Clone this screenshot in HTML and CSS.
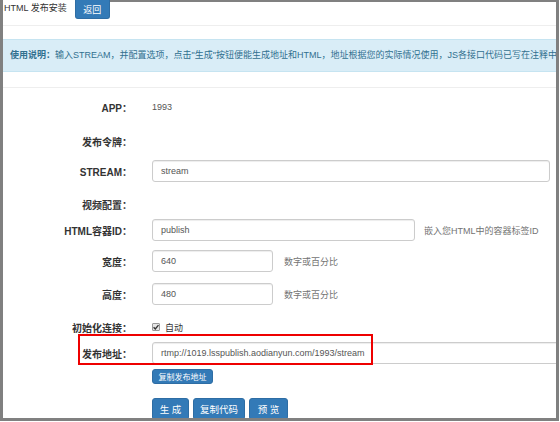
FILE: index.html
```html
<!DOCTYPE html>
<html lang="zh-CN">
<head>
<meta charset="utf-8">
<title>HTML 发布安装</title>
<link rel="stylesheet" href="styles.css">
</head>
<body>
<div class="frame">
  <div class="header">
    <span class="title">HTML 发布安装</span>
    <a class="btn btn-back">返回</a>
    <span class="topline"></span>
  </div>
  <div class="alert"><b>使用说明：</b>输入STREAM，并配置选项，点击"生成"按钮便能生成地址和HTML，地址根据您的实际情况使用，JS各接口代码已写在注释中</div>
  <div class="divider"></div>
  <div class="form">
    <div class="row">
      <span class="label">APP：</span>
      <span class="static">1993</span>
    </div>
    <div class="row g12">
      <span class="label">发布令牌：</span>
    </div>
    <div class="row g8">
      <span class="label">STREAM：</span>
      <span class="input w-full">stream</span>
    </div>
    <div class="row g11">
      <span class="label">视频配置：</span>
    </div>
    <div class="row g4">
      <span class="label">HTML容器ID：</span>
      <span class="input w-mid">publish</span>
      <span class="help help-wide">嵌入您HTML中的容器标签ID</span>
    </div>
    <div class="row g9">
      <span class="label">宽度：</span>
      <span class="input w-small">640</span>
      <span class="help">数字或百分比</span>
    </div>
    <div class="row g11">
      <span class="label">高度：</span>
      <span class="input w-small">480</span>
      <span class="help">数字或百分比</span>
    </div>
    <div class="row g11">
      <span class="label">初始化连接：</span>
      <span class="check">
        <span class="box"><svg viewBox="0 0 8 8" width="8" height="8"><path d="M1.6 4.2 L3.3 5.9 L6.5 2.1" fill="none" stroke="#333" stroke-width="1.4"/></svg></span>
        <span class="check-text">自动</span>
      </span>
    </div>
    <div class="row g4">
      <span class="label">发布地址：</span>
      <span class="input w-url">rtmp://1019.lsspublish.aodianyun.com/1993/stream</span>
    </div>
    <div class="row-btn g5">
      <a class="btn btn-xs">复制发布地址</a>
    </div>
    <div class="row-btn g14 actions">
      <a class="btn btn-main">生 成</a>
      <a class="btn btn-main">复制代码</a>
      <a class="btn btn-main">预 览</a>
    </div>
  </div>
  <div class="annot"></div>
</div>
</body>
</html>
```

FILE: styles.css
```css
html, body {
  margin: 0;
  padding: 0;
  background: #ffffff;
}
body {
  width: 560px;
  height: 422px;
  overflow: hidden;
  font-family: "Liberation Sans", "Noto Sans CJK SC", sans-serif;
  color: #333333;
}
.frame {
  position: relative;
  width: 559px;
  height: 421px;
  box-sizing: border-box;
  border-left: 3px solid #808080;
  border-right: 3px solid #808080;
  border-bottom: 3px solid #808080;
  overflow: hidden;
}
.header {
  display: flex;
  align-items: flex-start;
  height: 25px;
  border-bottom: 1px solid #eeeeee;
}
.title {
  font-size: 9px;
  line-height: 16px;
  padding-left: 1px;
  color: #333333;
}
.btn {
  display: inline-flex;
  align-items: center;
  justify-content: center;
  box-sizing: border-box;
  background: #337ab7;
  border: 1px solid #2e6da4;
  color: #ffffff;
  border-radius: 3px;
  white-space: nowrap;
}
.btn-back {
  margin-left: 8px;
  width: 35px;
  height: 19px;
  font-size: 9px;
  border-top: 0;
  border-radius: 0 0 3px 3px;
}
.topline {
  flex: 1;
  border-top: 2px solid #808080;
}
.alert {
  margin-top: 13px;
  height: 33px;
  box-sizing: border-box;
  background: #d9edf7;
  border-top: 1px solid #c6e4f1;
  border-bottom: 1px solid #c6e4f1;
  color: #31708f;
  font-size: 9px;
  line-height: 31px;
  padding-left: 7px;
  white-space: nowrap;
  overflow: hidden;
}
.divider {
  margin-top: 15px;
  border-top: 1px solid #eeeeee;
}
.form {
  display: flex;
  flex-direction: column;
  padding-top: 8px;
}
.row {
  display: flex;
  align-items: center;
  height: 22px;
}
.row-btn {
  display: flex;
  padding-left: 149px;
  gap: 4px;
}
.g4 { margin-top: 4px; }
.g5 { margin-top: 5px; }
.g8 { margin-top: 8px; }
.g9 { margin-top: 9px; }
.g11 { margin-top: 11px; }
.g12 { margin-top: 12px; }
.g14 { margin-top: 14px; }
.label {
  flex: none;
  width: 129px;
  margin-right: 20px;
  text-align: right;
  font-weight: bold;
  font-size: 10px;
  color: #333333;
  white-space: nowrap;
}
.static {
  font-size: 9px;
  color: #555555;
}
.input {
  flex: none;
  display: flex;
  align-items: center;
  box-sizing: border-box;
  height: 22px;
  padding-left: 8px;
  border: 1px solid #cccccc;
  border-radius: 3px;
  box-shadow: inset 0 1px 1px rgba(0, 0, 0, 0.075);
  font-size: 9px;
  color: #555555;
  white-space: nowrap;
  background: #ffffff;
}
.w-full { width: 398px; }
.w-mid { width: 263px; }
.w-small { width: 121px; }
.w-url { width: 430px; }
.help {
  margin-left: 11px;
  font-size: 9px;
  color: #737373;
  white-space: nowrap;
}
.help-wide { margin-left: 9px; }
.check {
  display: flex;
  align-items: center;
  gap: 5px;
}
.box {
  display: flex;
  width: 8px;
  height: 8px;
  box-sizing: border-box;
  border: 1px solid #999999;
  border-radius: 1px;
  background: #e6e6e6;
  overflow: hidden;
}
.box svg {
  margin: -1px;
}
.check-text {
  font-size: 9px;
  color: #333333;
}
.btn-xs {
  width: 61px;
  height: 15px;
  font-size: 8px;
}
.btn-main {
  height: 22px;
  font-size: 9.5px;
}
.actions .btn-main:nth-child(1) { width: 37px; }
.actions .btn-main:nth-child(2) { width: 52px; }
.actions .btn-main:nth-child(3) { width: 39px; }
.annot {
  position: absolute;
  left: 75px;
  top: 334px;
  width: 295px;
  height: 31px;
  box-sizing: border-box;
  border: 2px solid #ee0000;
}
```
